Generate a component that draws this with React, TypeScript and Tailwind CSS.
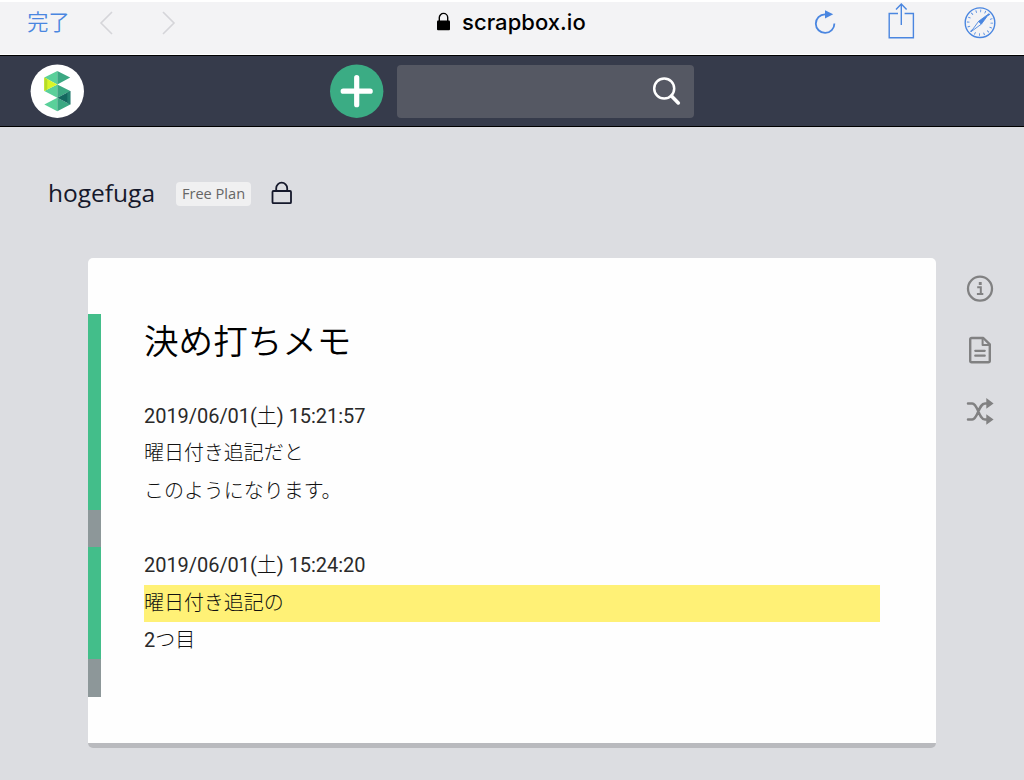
import { clsx } from "clsx";

const lines = [
  { text: "2019/06/01(土) 15:21:57" },
  { text: "曜日付き追記だと" },
  { text: "このようになります。" },
  { text: "", old: true },
  { text: "2019/06/01(土) 15:24:20" },
  { text: "曜日付き追記の", highlight: true },
  { text: "2つ目" },
  { text: "", old: true },
];

function BrowserBar() {
  return (
    <div className="flex h-[55px] items-start border-t-2 border-b border-white bg-[#f3f3f5] text-[#4a86e0]">
      <button className="mt-[5px] ml-[27px] w-[43px] text-[21.2px] leading-[32px] font-[350] whitespace-nowrap">
        完了
      </button>
      <svg className="mt-[8px] ml-[28px]" width="16" height="26" fill="none" stroke="#d5d5d9" strokeWidth="1.6">
        <path d="M14 2 3 13l11 11" />
      </svg>
      <svg className="mt-[8px] ml-[47px]" width="16" height="26" fill="none" stroke="#d5d5d9" strokeWidth="1.6">
        <path d="m2 2 11 11L2 24" />
      </svg>
      <div className="mt-[4px] ml-[259px] flex w-[152px] items-center text-black">
        <svg width="15" height="20" viewBox="0 0 15 20" className="mr-[11px]">
          <path d="M3.3 9V5.6a4.2 4.2 0 0 1 8.4 0V9" fill="none" stroke="black" strokeWidth="1.4" />
          <rect x="1" y="8.5" width="13" height="9.8" rx="1" />
        </svg>
        <span className="font-['Inter','Liberation_Sans',sans-serif] text-[22px] leading-[32px] font-medium tracking-[0.05px]">
          scrapbox.io
        </span>
      </div>
      <svg className="mt-[8px] ml-[226px]" width="22" height="26" viewBox="0 0 22 26" fill="none" stroke="currentColor" strokeWidth="1.8">
        <path d="M11 4.3a9.3 9.3 0 1 0 9.4 9.2" />
        <path d="m11 .3 8.2 4-8.2 4.2z" fill="currentColor" stroke="none" />
      </svg>
      <svg className="ml-[51px]" width="28" height="38" viewBox="0 0 28 38" fill="none" stroke="currentColor" strokeWidth="1.4">
        <path d="M11 11.5H2.2v24.2h24.2V11.5h-8.8M14.3 23V2.4M9 7.4 14.3 2l5.3 5.4" />
      </svg>
      <svg className="mt-[4px] ml-[48px]" width="34" height="34" viewBox="0 0 34 34" fill="none" stroke="currentColor">
        <circle cx="17" cy="16.7" r="14.8" strokeWidth="1.4" />
        <circle cx="17" cy="16.7" r="11.8" strokeWidth="2.6" strokeDasharray="0.8 3.834" />
        <path d="m8 25.7 7.6-10.4 2.8 2.8z" fill="#f3f3f5" strokeWidth="0.9" />
        <path d="m26 7.7-10.4 7.6 2.8 2.8z" fill="currentColor" strokeWidth="0.9" />
      </svg>
    </div>
  );
}

function Logo() {
  return (
    <svg width="54" height="54" viewBox="30 64 54 54">
      <circle cx="57.3" cy="91.2" r="26.7" fill="white" />
      <path d="M57.3 71 44.3 77.6l13 6.8zM57.3 84.4 44.3 91l13 6.8zM57.3 97.8 44.3 104.4l13 6.8z" fill="#5ad09a" />
      <path d="m57.3 71 12.9 6.6-12.9 6.8zM57.3 84.4 70.3 91l-13 6.8zM57.3 97.8l13 6.6-13 6.8z" fill="#3ba882" />
      <path d="m44.3 77.6 13 6.8-13 6.6z" fill="#d9f628" />
      <path d="m44.3 77.6 3 1.6v10.3l-3 1.5z" fill="#b6dc28" />
      <path d="m70.3 91-13 6.8 13 6.6z" fill="#14685f" />
      <path d="m70.3 91-3 1.5v10.4l3 1.5z" fill="#238170" />
    </svg>
  );
}

function Navbar() {
  return (
    <header className="flex h-[72px] items-center border-y border-black bg-[#363b4b] pl-[30px]">
      <Logo />
      <button className="ml-[246px]">
        <svg width="54" height="54" viewBox="0 0 54 54">
          <circle cx="26.7" cy="27.2" r="26.7" fill="#3bac84" />
          <path d="M26.7 13.7v27M13.2 27.2h27" stroke="white" strokeWidth="5.2" strokeLinecap="round" />
        </svg>
      </button>
      <div className="ml-[13px] flex h-[53px] w-[297px] items-center justify-end rounded-[4px] bg-[#555863] pr-[13px]">
        <svg width="29" height="30" viewBox="0 0 29 30" fill="none" stroke="white">
          <circle cx="12.2" cy="12.5" r="10" strokeWidth="2.5" />
          <path d="m19.5 20 6.8 6.9" strokeWidth="3.6" strokeLinecap="round" />
        </svg>
      </div>
    </header>
  );
}

function ProjectTitle() {
  return (
    <div className="flex h-[131px] items-center pt-px pl-[48px] font-['Open_Sans',sans-serif]">
      <span className="w-[128px] text-[24.5px] font-[450] text-[#15182b]">hogefuga</span>
      <span className="mt-px flex h-[24px] w-[75px] items-center justify-center rounded-[4px] bg-[#f0f0f1] text-[14.6px] text-[#666]">
        Free Plan
      </span>
      <svg className="mb-px ml-[20px]" width="22" height="24" viewBox="0 0 22 24" fill="none" stroke="#15182b" strokeWidth="1.8">
        <rect x="1.5" y="10" width="18.5" height="12.2" rx="1" />
        <path d="M5.2 10V7.2a5.5 5.5 0 0 1 11 0V10" />
      </svg>
    </div>
  );
}

function LineText({ text }: { text: string }) {
  // Latin and digits keep the regular weight, kana and kanji are thinner
  return text.split(/([^\x00-\x7f]+)/).map((part, i) => (
    <span key={i} className={i % 2 ? "font-light" : "font-normal text-[#2a2a2a]"}>
      {part}
    </span>
  ));
}

function Page() {
  return (
    <main className="h-[490px] w-[848px] rounded-[5px] border-b-[5px] border-[#b9babe] bg-[#fefefe] pt-[56px] text-[#111]">
      <div className="flex h-[84px]">
        <div className="w-[13.3px] bg-[#43be8a]" />
        <h1 className="ml-[42.7px] text-[34.6px] leading-[56px] font-[350] text-black">決め打ちメモ</h1>
      </div>
      {lines.map((line, i) => (
        <div key={i} className="flex h-[37.33px] pr-[56px] text-[20px] leading-[37.6px]">
          <div className={clsx("w-[13.3px]", line.old ? "bg-[#8d9799]" : "bg-[#43be8a]")} />
          <p className={clsx("ml-[42.7px] flex-1 tracking-[-0.04px]", line.highlight && "bg-[#fff176]")}>
            <LineText text={line.text} />
          </p>
        </div>
      ))}
    </main>
  );
}

function SideMenu() {
  return (
    <aside className="flex flex-col gap-[33px] pt-[16px] pl-[30px]">
      <svg width="28" height="29" viewBox="0 0 28 29" fill="none" stroke="#818182">
        <circle cx="14" cy="14.7" r="12" strokeWidth="2.3" />
        <path d="M11.2 13.2h3.6v6.4M10.9 20.1h6.4" strokeWidth="2" />
        <path d="M12.8 8h2.9v3h-2.9z" fill="#818182" stroke="none" />
      </svg>
      <svg width="28" height="28" viewBox="0 0 28 28" fill="none" stroke="#818182" strokeWidth="2.4" strokeLinejoin="round">
        <path d="M5.7 2h11.6l6.5 6.4v16.3c0 1-.5 1.5-1.5 1.5H5.7c-1 0-1.5-.5-1.5-1.5V3.5C4.2 2.5 4.7 2 5.7 2z" />
        <path d="M16.6 2.5v6.6h6.8" strokeWidth="2" />
        <path d="M9.3 14.8h9.4M9.3 19.7h9.4" strokeLinecap="round" strokeWidth="2.3" />
      </svg>
      <svg width="28" height="28" viewBox="0 0 28 28" fill="none" stroke="#818182" strokeWidth="2.5" strokeLinecap="round">
        <path d="M2 6.4h4.2C12 6.4 12.5 22.5 19 22.5h2M2 22.5h4.2C12 22.5 12.5 6.4 19 6.4h2" />
        <path d="M20.3 1.1 27.6 6.4l-7.3 5.4zM20.3 17.2l7.3 5.3-7.3 5.3z" fill="#818182" stroke="none" />
      </svg>
    </aside>
  );
}

export default function App() {
  return (
    <div className="h-[780px] w-[1024px] overflow-hidden bg-[#dcdde1] font-['Roboto','Noto_Sans_CJK_JP',sans-serif]">
      <BrowserBar />
      <Navbar />
      <ProjectTitle />
      <div className="flex pl-[88px]">
        <Page />
        <SideMenu />
      </div>
    </div>
  );
}
